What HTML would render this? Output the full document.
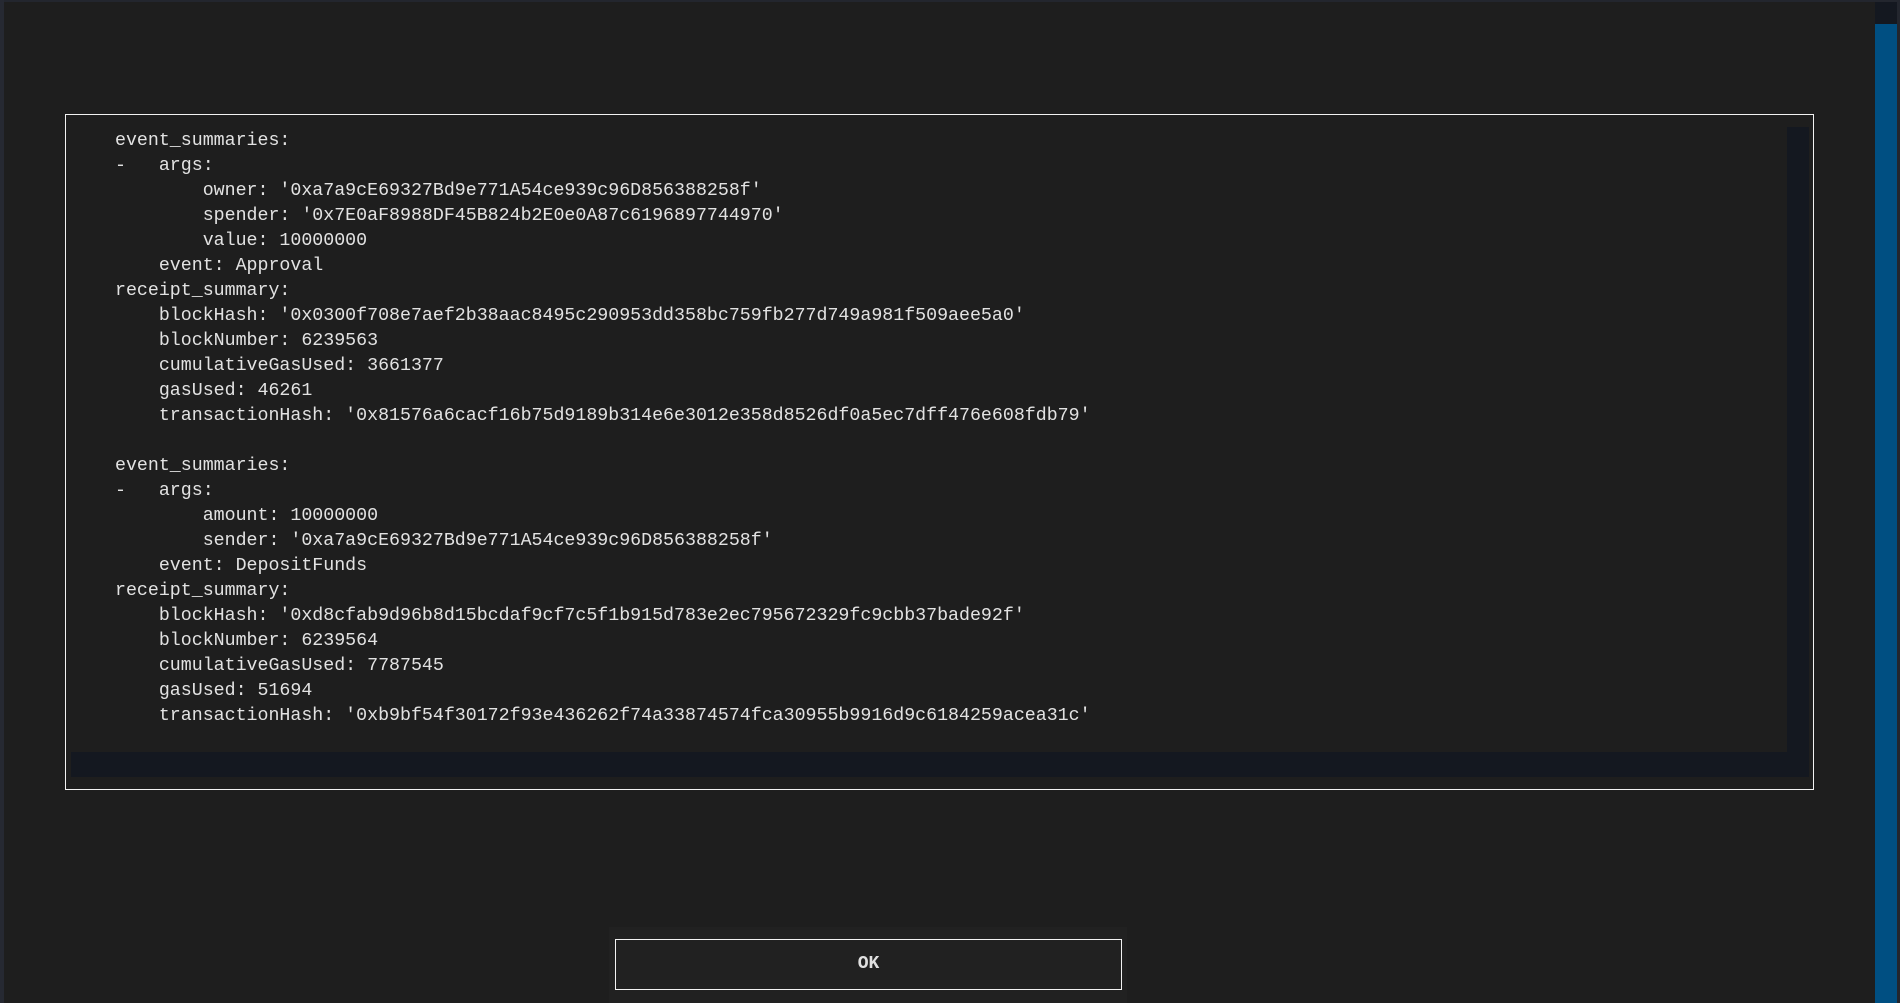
<!DOCTYPE html>
<html><head><meta charset="utf-8"><style>
html,body{margin:0;padding:0;width:1900px;height:1003px;overflow:hidden;background:#1e1e1e;position:relative;font-family:"Liberation Mono",monospace;}
.topb{position:absolute;left:0;top:0;width:1900px;height:2px;background:#23262e;}
.leftb{position:absolute;left:0;top:0;width:4px;height:1003px;background:#262932;}
.sbtrack{position:absolute;left:1875px;top:2px;width:22px;height:1001px;background:#141820;}
.sbthumb{position:absolute;left:1875px;top:24px;width:22px;height:979px;background:#004f82;}
.rightb{position:absolute;left:1897px;top:0;width:3px;height:1003px;background:#23262e;}
.box{position:absolute;left:65px;top:114px;width:1747px;height:674px;border:1px solid #f2f2f2;}
.vs{position:absolute;left:1787px;top:127px;width:22px;height:650px;background:#141820;}
.hs{position:absolute;left:71px;top:752px;width:1716px;height:25px;background:#141820;}
pre{position:absolute;left:115px;top:129px;margin:0;font-family:"Liberation Mono",monospace;font-size:18.27px;line-height:25px;color:#e2e2e2;}
.okwrap{position:absolute;left:609px;top:927px;width:518px;height:76px;background:#212121;}
.ok{position:absolute;left:615px;top:939px;width:505px;height:49px;border:1px solid #f2f2f2;color:#e0e0e0;font-family:"Liberation Mono",monospace;font-weight:bold;font-size:18px;text-align:center;line-height:49px;}
</style></head><body>
<div class="topb"></div><div class="leftb"></div>
<div class="sbtrack"></div><div class="sbthumb"></div><div class="rightb"></div>
<div class="box"></div>
<div class="vs"></div><div class="hs"></div>
<pre>event_summaries:
-   args:
        owner: '0xa7a9cE69327Bd9e771A54ce939c96D856388258f'
        spender: '0x7E0aF8988DF45B824b2E0e0A87c6196897744970'
        value: 10000000
    event: Approval
receipt_summary:
    blockHash: '0x0300f708e7aef2b38aac8495c290953dd358bc759fb277d749a981f509aee5a0'
    blockNumber: 6239563
    cumulativeGasUsed: 3661377
    gasUsed: 46261
    transactionHash: '0x81576a6cacf16b75d9189b314e6e3012e358d8526df0a5ec7dff476e608fdb79'

event_summaries:
-   args:
        amount: 10000000
        sender: '0xa7a9cE69327Bd9e771A54ce939c96D856388258f'
    event: DepositFunds
receipt_summary:
    blockHash: '0xd8cfab9d96b8d15bcdaf9cf7c5f1b915d783e2ec795672329fc9cbb37bade92f'
    blockNumber: 6239564
    cumulativeGasUsed: 7787545
    gasUsed: 51694
    transactionHash: '0xb9bf54f30172f93e436262f74a33874574fca30955b9916d9c6184259acea31c'</pre>
<div class="okwrap"></div>
<div class="ok">OK</div>
</body></html>
